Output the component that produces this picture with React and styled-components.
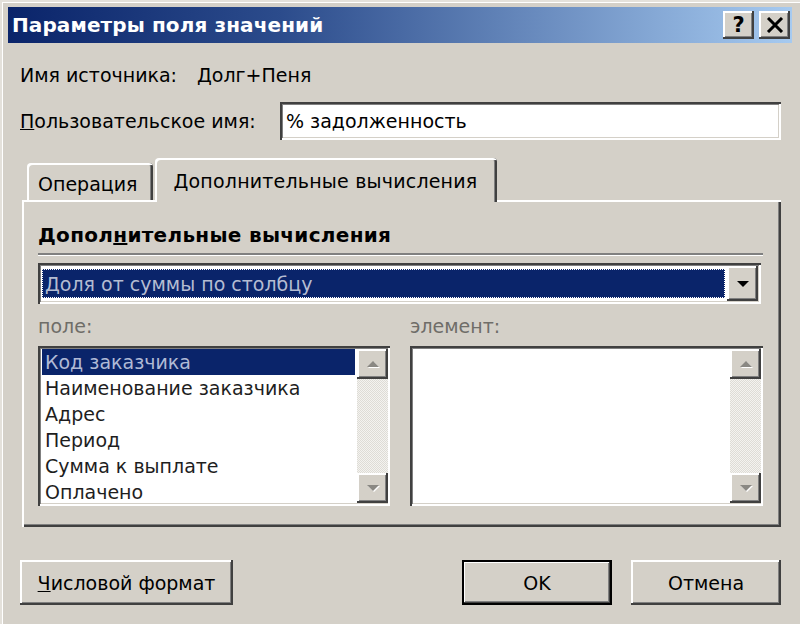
import React from "react";
import styled, { createGlobalStyle } from "styled-components";

const GlobalStyle = createGlobalStyle`
  html, body {
    margin: 0;
    padding: 0;
    background: #d4d0c8;
  }
  body {
    font-family: "DejaVu Sans", Tahoma, sans-serif;
    font-size: 19px;
    color: #000;
  }
  * { box-sizing: border-box; }
`;

const raisedBevel = `
  box-shadow:
    inset -2px -2px 0 #404040,
    inset 2px 2px 0 #ffffff,
    inset -3px -3px 0 #808080;
`;

const sunkenBevel = `
  box-shadow:
    inset 2px 2px 0 #404040,
    inset -2px -2px 0 #ffffff,
    inset 3px 3px 0 #808080,
    inset -3px -3px 0 #d4d0c8;
`;

const Window = styled.div`
  width: 800px;
  height: 624px;
  padding: 7px 8px 0 8px;
  background: #d4d0c8;
  box-shadow: inset 2px 2px 0 #e4e1db, inset 3px 3px 0 #ffffff;
  overflow: hidden;
`;

const TitleBar = styled.div`
  height: 36px;
  display: flex;
  align-items: center;
  justify-content: space-between;
  padding: 0 2px 0 4px;
  background: linear-gradient(90deg, #0a246a 0%, #2c4c8c 35%, #a6caf0 100%);
`;

const Title = styled.div`
  color: #fff;
  font-weight: bold;
  font-size: 20px;
  letter-spacing: 0.1px;
`;

const CaptionButtons = styled.div`
  display: flex;
  gap: 5px;
`;

const CaptionButton = styled.div`
  width: 31px;
  height: 28px;
  display: flex;
  align-items: center;
  justify-content: center;
  background: #d4d0c8;
  font-weight: bold;
  font-size: 21px;
  ${raisedBevel}
`;

const Body = styled.div`
  padding: 0 11px 0 12px;
`;

const InfoRow = styled.div`
  margin-top: 18px;
  height: 28px;
  display: flex;
  align-items: center;
`;

const InfoLabel = styled.span`
  width: 177px;
`;

const FieldRow = styled.div`
  margin-top: 13px;
  height: 38px;
  display: flex;
  align-items: center;
`;

const FieldLabel = styled.span`
  width: 260px;
`;

const TextBox = styled.div`
  flex: 1;
  height: 38px;
  display: flex;
  align-items: center;
  padding-left: 6px;
  background: #fff;
  ${sunkenBevel}
`;

const Tabs = styled.div`
  margin-top: 18px;
  margin-left: 2px;
`;

const TabStrip = styled.div`
  display: flex;
  align-items: flex-end;
  padding-left: 5px;
  height: 42px;
`;

const Tab = styled.div`
  position: relative;
  z-index: 1;
  height: ${(p) => (p.$active ? "44px" : "37px")};
  margin-bottom: ${(p) => (p.$active ? "-2px" : "0")};
  margin-right: 2px;
  padding: ${(p) => (p.$active ? "12px 20px 0 18px" : "10px 16px 0 11px")};
  line-height: 22px;
  letter-spacing: ${(p) => (p.$active ? "0.2px" : "0")};
  background: #d4d0c8;
  border-radius: 4px 4px 0 0;
  box-shadow:
    inset 2px 2px 0 #ffffff,
    inset -2px 0 0 #404040,
    inset -3px 0 0 #808080;
  white-space: nowrap;
`;

const TabPanel = styled.div`
  height: 327px;
  padding: 21px 18px 0 16px;
  background: #d4d0c8;
  box-shadow:
    inset 2px 2px 0 #ffffff,
    inset -2px -2px 0 #404040,
    inset -3px -3px 0 #808080;
`;

const GroupTitle = styled.div`
  height: 28px;
  line-height: 28px;
  font-weight: bold;
  font-size: 20px;
  letter-spacing: 0.3px;
`;

const Rule = styled.div`
  margin-top: 4px;
  height: 3px;
  border-top: 2px solid #808080;
  border-bottom: 1px solid #ffffff;
`;

const Combo = styled.div`
  margin-top: 7px;
  margin-right: 2px;
  height: 41px;
  padding: 3px;
  display: flex;
  background: #fff;
  ${sunkenBevel}
`;

const ComboValue = styled.div`
  flex: 1;
  margin: 3px 2px 3px 1px;
  padding-left: 3px;
  display: flex;
  align-items: center;
  background: #0a246a;
  color: #b4bcd2;
  outline: 1px dotted #ffffff;
  outline-offset: -1px;
  white-space: nowrap;
  overflow: hidden;
`;

const DropButton = styled.div`
  width: 31px;
  display: flex;
  align-items: center;
  justify-content: center;
  background: #d4d0c8;
  ${raisedBevel}
`;

const Lists = styled.div`
  margin-top: 10px;
  display: grid;
  grid-template-columns: 352px 353px;
  column-gap: 20px;
`;

const DimLabel = styled.div`
  height: 24px;
  line-height: 24px;
  margin-bottom: 8px;
  color: #6f6d68;
`;

const ListBox = styled.div`
  height: 160px;
  padding: 3px 2px 3px 4px;
  display: flex;
  background: #fff;
  ${sunkenBevel}
`;

const Items = styled.div`
  flex: 1;
  overflow: hidden;
`;

const Item = styled.div`
  height: 26px;
  line-height: 26px;
  padding-left: 3px;
  white-space: nowrap;
  color: ${(p) => (p.$selected ? "#b0bad6" : "#1e1e1e")};
  background: ${(p) => (p.$selected ? "#0a246a" : "transparent")};
  margin-right: ${(p) => (p.$selected ? "2px" : "0")};
`;

const ScrollBar = styled.div`
  width: 31px;
  display: flex;
  flex-direction: column;
  background: repeating-conic-gradient(#f4f3f0 0% 25%, #dedcd6 0% 50%) 0 0 / 2px 2px;
`;

const ScrollButton = styled.div`
  height: 30px;
  display: flex;
  align-items: center;
  justify-content: center;
  background: #d4d0c8;
  ${raisedBevel}
`;

const ScrollTrack = styled.div`
  flex: 1;
`;

const Footer = styled.div`
  margin-top: 33px;
  display: flex;
  align-items: center;
  gap: 19px;
`;

const Button = styled.div`
  width: ${(p) => p.$width || 150}px;
  height: 45px;
  display: flex;
  align-items: center;
  justify-content: center;
  background: #d4d0c8;
  ${(p) =>
    p.$default
      ? `box-shadow:
          inset 0 0 0 2px #000000,
          inset -3px -3px 0 #404040,
          inset 3px 3px 0 #ffffff,
          inset -4px -4px 0 #808080;`
      : raisedBevel}
  &:first-child {
    margin-right: auto;
  }
`;

const Arrow = ({ dir = "down", color = "#000", shadow }) => (
  <svg width="16" height="10" viewBox="0 0 16 10">
    {shadow && (
      <polygon
        points={dir === "down" ? "3,3 15,3 9,9" : "3,9 15,9 9,3"}
        fill={shadow}
      />
    )}
    <polygon
      points={dir === "down" ? "2,2 14,2 8,8" : "2,8 14,8 8,2"}
      fill={color}
    />
  </svg>
);

const CloseGlyph = () => (
  <svg width="18" height="16" viewBox="0 0 18 16">
    <path d="M2 1 L16 15 M16 1 L2 15" stroke="#000" strokeWidth="3" />
  </svg>
);

const fields = [
  "Код заказчика",
  "Наименование заказчика",
  "Адрес",
  "Период",
  "Сумма к выплате",
  "Оплачено",
];

const Scroll = () => (
  <ScrollBar>
    <ScrollButton>
      <Arrow dir="up" color="#8a8883" shadow="#ffffff" />
    </ScrollButton>
    <ScrollTrack />
    <ScrollButton>
      <Arrow dir="down" color="#8a8883" shadow="#ffffff" />
    </ScrollButton>
  </ScrollBar>
);

export default function App() {
  return (
    <>
      <GlobalStyle />
      <Window>
        <TitleBar>
          <Title>Параметры поля значений</Title>
          <CaptionButtons>
            <CaptionButton>?</CaptionButton>
            <CaptionButton>
              <CloseGlyph />
            </CaptionButton>
          </CaptionButtons>
        </TitleBar>
        <Body>
          <InfoRow>
            <InfoLabel>Имя источника:</InfoLabel>
            <span>Долг+Пеня</span>
          </InfoRow>
          <FieldRow>
            <FieldLabel>
              <u>П</u>ользовательское имя:
            </FieldLabel>
            <TextBox>% задолженность</TextBox>
          </FieldRow>
          <Tabs>
            <TabStrip>
              <Tab>Операция</Tab>
              <Tab $active>Дополнительные вычисления</Tab>
            </TabStrip>
            <TabPanel>
              <GroupTitle>
                Допол<u>н</u>ительные вычисления
              </GroupTitle>
              <Rule />
              <Combo>
                <ComboValue>Доля от суммы по столбцу</ComboValue>
                <DropButton>
                  <Arrow dir="down" />
                </DropButton>
              </Combo>
              <Lists>
                <div>
                  <DimLabel>поле:</DimLabel>
                  <ListBox>
                    <Items>
                      {fields.map((f, i) => (
                        <Item key={f} $selected={i === 0}>
                          {f}
                        </Item>
                      ))}
                    </Items>
                    <Scroll />
                  </ListBox>
                </div>
                <div>
                  <DimLabel>элемент:</DimLabel>
                  <ListBox>
                    <Items />
                    <Scroll />
                  </ListBox>
                </div>
              </Lists>
            </TabPanel>
          </Tabs>
          <Footer>
            <Button $width={213}>
              <span>
                <u>Ч</u>исловой формат
              </span>
            </Button>
            <Button $default>OK</Button>
            <Button>Отмена</Button>
          </Footer>
        </Body>
      </Window>
    </>
  );
}
